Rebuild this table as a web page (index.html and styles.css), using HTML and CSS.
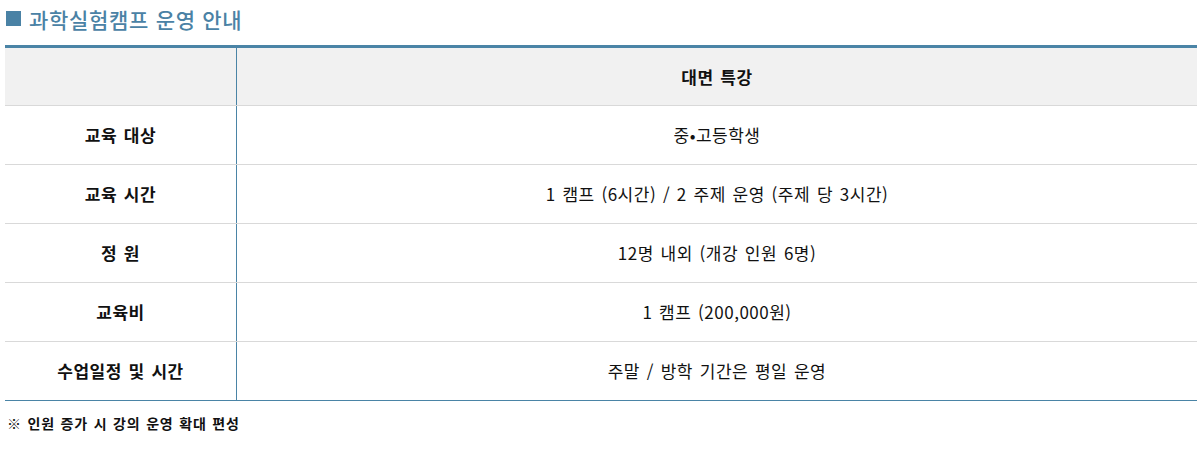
FILE: index.html
```html
<!DOCTYPE html>
<html lang="ko">
<head>
<meta charset="utf-8">
<link rel="stylesheet" href="styles.css">
</head>
<body>
<div class="page">
  <h2 class="title"><span class="sq"></span>과학실험캠프 운영 안내</h2>
  <table class="info">
    <thead>
      <tr><th class="lbl"></th><th>대면 특강</th></tr>
    </thead>
    <tbody>
      <tr><th class="lbl">교육 대상</th><td>중•고등학생</td></tr>
      <tr><th class="lbl">교육 시간</th><td>1 캠프 (6시간) / 2 주제 운영 (주제 당 3시간)</td></tr>
      <tr><th class="lbl">정 원</th><td>12명 내외 (개강 인원 6명)</td></tr>
      <tr><th class="lbl">교육비</th><td>1 캠프 (200,000원)</td></tr>
      <tr><th class="lbl">수업일정 및 시간</th><td>주말 / 방학 기간은 평일 운영</td></tr>
    </tbody>
  </table>
  <p class="note">※ 인원 증가 시 강의 운영 확대 편성</p>
</div>
</body>
</html>
```
FILE: styles.css
```css
html, body { margin: 0; padding: 0; background: #fff; }
body { font-family: "Noto Sans CJK KR", "Noto Sans", sans-serif; color: #111; }
.page { padding: 0 4px 0 5px; }
.title {
  margin: 0;
  height: 45px;
  display: flex;
  align-items: center;
  padding-bottom: 8px;
  box-sizing: border-box;
  font-size: 21px;
  font-weight: 500;
  color: #4a82a5;
  letter-spacing: 0.7px;
}
.sq { width: 15px; height: 15px; background: #4a82a5; margin: 0 8px 0 1px; }
.info {
  width: 100%;
  border-collapse: collapse;
  border-top: 3px solid #4a84a6;
  border-bottom: 1px solid #4a84a6;
  font-size: 17px;
  letter-spacing: 0.5px;
  word-spacing: 1.5px;
}
.info th, .info td {
  text-align: center;
  border-bottom: 1px solid #d9d9d9;
  height: 58px;
  padding: 0;
  line-height: 20px;
}
.info tbody tr:last-child th, .info tbody tr:last-child td { border-bottom: 1px solid #4a84a6; }
.info thead th { background: #f1f1f1; height: 57px; font-weight: 700; }
.info .lbl { width: 231px; border-right: 1px solid #4a84a6; font-weight: 700; }
.info td { font-weight: 400; }
.note { margin: 12px 0 0 2px; font-size: 14px; font-weight: 700; letter-spacing: 0.8px; word-spacing: 1px; line-height: 20px; }
```
